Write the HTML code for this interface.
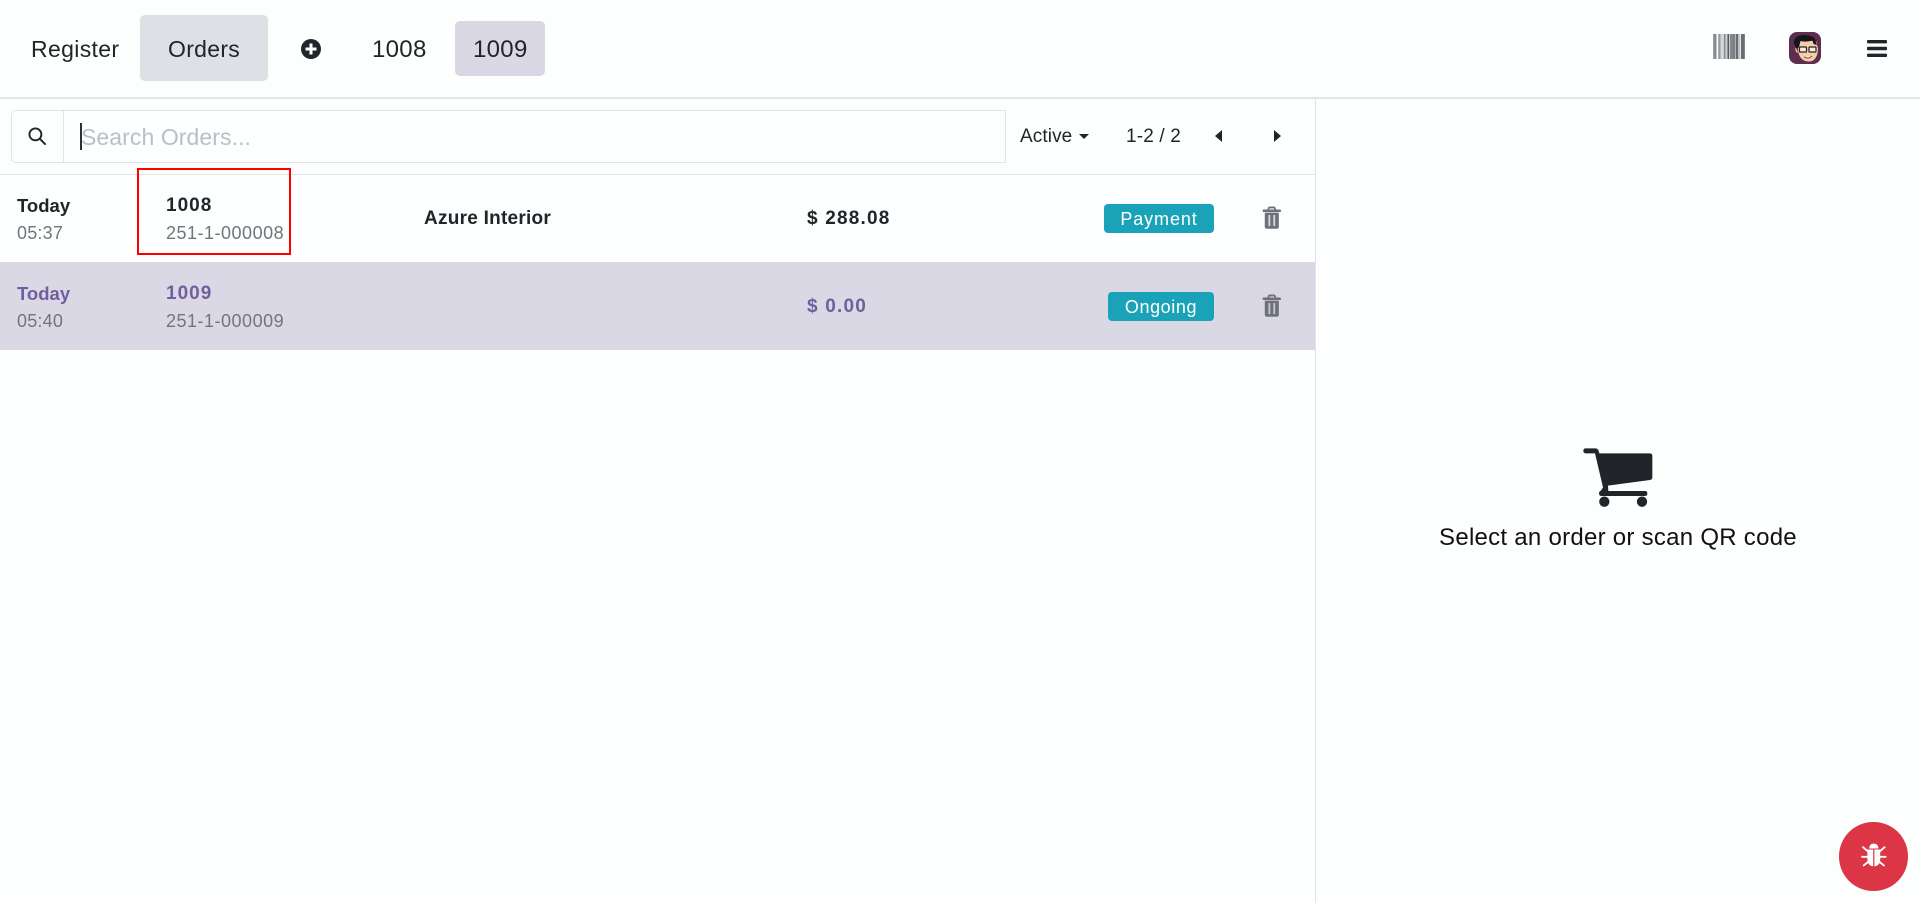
<!DOCTYPE html>
<html lang="en"><head><meta charset="utf-8"><title>Orders</title>
<style>
html,body{margin:0;padding:0}
body{width:1920px;height:903px;overflow:hidden;background:#fdfefe;position:relative;font-family:"Liberation Sans",sans-serif;color:#212529}
.a{position:absolute;white-space:nowrap}
.t{position:absolute;white-space:nowrap;line-height:30px;height:30px}
.b{font-weight:700}
.p{color:#6f5f9f}
.g{color:#72757c}
svg{position:absolute;display:block}
</style></head><body>
<div class="a" style="left:0;top:97px;width:1920px;height:2px;background:#e3e4ea"></div>
<div class="a" style="left:140px;top:15px;width:128px;height:66px;background:#dee0e6;border-radius:5px"></div>
<div class="a" style="left:455px;top:21px;width:90px;height:55px;background:#dbd8e5;border-radius:5px"></div>
<div class="t" style="left:31px;top:34px;font-size:23px;letter-spacing:.35px">Register</div>
<div class="t" style="left:168px;top:34px;font-size:23px;letter-spacing:.3px">Orders</div>
<svg style="left:301px;top:39px" width="20" height="20" viewBox="0 0 20 20"><circle cx="10" cy="10" r="10" fill="#212529"/><path d="M8.500 4.500h3v4h4v3h-4v4h-3v-4h-4v-3h4z" fill="#fff"/></svg>
<div class="t" style="left:372px;top:34.500px;font-size:24px;letter-spacing:.3px">1008</div>
<div class="t" style="left:473px;top:34.500px;font-size:24px;letter-spacing:.3px">1009</div>
<svg style="left:1713px;top:34px" width="32" height="25" viewBox="0 0 95 75"><rect x="0" width="10" height="75" fill="#8a8c91"/><rect x="15" width="7" height="75" fill="#9a9ca1"/><rect x="22" width="10" height="75" fill="#d4d5d8"/><rect x="32" width="5" height="75" fill="#8a8c91"/><rect x="37" width="6" height="75" fill="#d0d1d4"/><rect x="43" width="5" height="75" fill="#55585e"/><rect x="50" width="10" height="75" fill="#85878c"/><rect x="60" width="5" height="75" fill="#66696f"/><rect x="67" width="8" height="75" fill="#696c72"/><rect x="75" width="5" height="75" fill="#b8b9bd"/><rect x="83" width="12" height="75" fill="#696c72"/></svg>
<svg style="left:1789px;top:32px" width="32" height="32" viewBox="0 0 32 32"><rect width="32" height="32" rx="8" fill="#5d2e50"/><path d="M9 14c-.5 9 3 15.500 11 15.500 6 0 9-6 9-13L27 9H11z" fill="#f5cdaa"/><path d="M7 16l-1 0 1 4 2.500 1z" fill="#f0bd98"/><path d="M5 12C4 6 9 3 15 3c7 0 12 2 12 8l1 2-3.500-1-1-4c-4 2-8 2-12 1l-1.500 6L8 17z" fill="#17171a"/><rect x="10.500" y="15" width="7" height="5" rx=".8" fill="#f8ecdf" stroke="#222" stroke-width="1.200"/><rect x="20" y="15" width="7" height="5" rx=".8" fill="#f8ecdf" stroke="#222" stroke-width="1.200"/><path d="M15 25c3 1.500 6 1 8-1" fill="#fff" stroke="#8a4a3a" stroke-width="1"/></svg>
<svg style="left:1867px;top:40px" width="20" height="17" viewBox="0 0 20 17" fill="#212529"><rect width="20" height="3.400" rx="1"/><rect y="6.800" width="20" height="3.400" rx="1"/><rect y="13.600" width="20" height="3.400" rx="1"/></svg>

<div class="a" style="left:11px;top:110px;width:993px;height:51px;border:1px solid #e2e3ea;border-radius:5px 0 0 5px"></div>
<div class="a" style="left:63px;top:110px;width:1px;height:53px;background:#e2e3ea"></div>
<svg style="left:28px;top:127px" width="18" height="18" viewBox="0 0 19 19" fill="none" stroke="#212529" stroke-width="2"><circle cx="7.800" cy="7.800" r="6.300"/><path d="M12.500 12.500l5.500 5.500" stroke-linecap="round"/></svg>
<div class="a" style="left:80px;top:123px;width:1.500px;height:27px;background:#2b2f36"></div>
<div class="t" style="left:81px;top:122px;font-size:23px;color:#bdbdc8;letter-spacing:.08px">Search Orders...</div>
<div class="t" style="left:1020px;top:121.500px;font-size:19px;letter-spacing:.1px">Active</div>
<div class="a" style="left:1079px;top:134px;width:0;height:0;border-left:5.500px solid transparent;border-right:5.500px solid transparent;border-top:5.500px solid #212529"></div>
<div class="t" style="left:1126px;top:121.500px;font-size:19px;letter-spacing:.15px">1-2 / 2</div>
<div class="a" style="left:1215px;top:130px;width:0;height:0;border-top:6px solid transparent;border-bottom:6px solid transparent;border-right:7px solid #212529"></div>
<div class="a" style="left:1274px;top:130px;width:0;height:0;border-top:6px solid transparent;border-bottom:6px solid transparent;border-left:7px solid #212529"></div>

<div class="a" style="left:0;top:174px;width:1315px;height:1px;background:#e3e4ea"></div>
<div class="a" style="left:1315px;top:98px;width:1px;height:805px;background:#e3e4ea"></div>
<div class="a" style="left:0;top:262px;width:1315px;height:88px;background:#dbd8e5"></div>

<div class="t b" style="left:17px;top:190.500px;font-size:18.500px">Today</div>
<div class="t g" style="left:17px;top:218px;font-size:18px;letter-spacing:.2px">05:37</div>
<div class="t b" style="left:166px;top:191px;font-size:19px;letter-spacing:1px">1008</div>
<div class="t g" style="left:166px;top:218px;font-size:18px;letter-spacing:.5px">251-1-000008</div>
<div class="t b" style="left:424px;top:204px;font-size:19px;letter-spacing:.25px">Azure Interior</div>
<div class="t b" style="left:807px;top:204px;font-size:19px;letter-spacing:1.200px">$ 288.08</div>
<div class="a" style="left:1104px;top:204px;width:110px;height:29px;background:#1aa3b8;border-radius:4px"></div>
<div class="t" style="left:1104px;top:204px;width:110px;text-align:center;font-size:18px;color:#fff;letter-spacing:.9px">Payment</div>
<div class="a" style="left:137px;top:168px;width:150px;height:83px;border:2.500px solid #f00"></div>

<div class="t b p" style="left:17px;top:278.500px;font-size:18.500px">Today</div>
<div class="t g" style="left:17px;top:306px;font-size:18px;letter-spacing:.2px">05:40</div>
<div class="t b p" style="left:166px;top:279px;font-size:19px;letter-spacing:1px">1009</div>
<div class="t g" style="left:166px;top:306px;font-size:18px;letter-spacing:.5px">251-1-000009</div>
<div class="t b p" style="left:807px;top:292px;font-size:19px;letter-spacing:1.200px">$ 0.00</div>
<div class="a" style="left:1108px;top:292px;width:106px;height:29px;background:#1aa3b8;border-radius:4px"></div>
<div class="t" style="left:1108px;top:292px;width:106px;text-align:center;font-size:18px;color:#fff;letter-spacing:.6px">Ongoing</div>

<svg style="left:1255px;top:201px" width="33" height="33" viewBox="0 0 108 108"><g fill="#6e7177"><path d="M40 29l3-8q1-3 5-3h14q4 0 5 3l3 8h-6l-2-5H48l-2 5z"/><rect x="25" y="28" width="60" height="8" rx="3"/><path d="M32 38h46v46q0 7-7 7H39q-7 0-7-7z"/></g><rect x="44" y="46" width="6" height="36" fill="#d8d9dc"/><rect x="60" y="46" width="6" height="36" fill="#d8d9dc"/></svg>
<svg style="left:1255px;top:289px" width="33" height="33" viewBox="0 0 108 108"><g fill="#6e7177"><path d="M40 29l3-8q1-3 5-3h14q4 0 5 3l3 8h-6l-2-5H48l-2 5z"/><rect x="25" y="28" width="60" height="8" rx="3"/><path d="M32 38h46v46q0 7-7 7H39q-7 0-7-7z"/></g><rect x="44" y="46" width="6" height="36" fill="#c9c6d2"/><rect x="60" y="46" width="6" height="36" fill="#c9c6d2"/></svg>

<svg style="left:1575px;top:440px" width="90" height="75" viewBox="0 0 270 225" fill="#212529"><path d="M32 25H60Q69 25 71 33L73 40H224Q232 40 232 48V112Q232 119 225 120L99 137L100 153H210Q217 153 217 160Q217 168 210 168H80Q72 168 72 160Q72 154 78 152L84 142L60 40H32Q25 40 25 32Q25 25 32 25Z"/><circle cx="88" cy="185" r="15.500"/><circle cx="201" cy="185" r="15.500"/></svg>
<div class="t" style="left:1315px;top:523px;width:606px;text-align:center;font-size:24px;letter-spacing:.27px;color:#111">Select an order or scan QR code</div>

<div class="a" style="left:1839px;top:822px;width:68.500px;height:68.500px;border-radius:50%;background:#dc3545"></div>
<svg style="left:1856.700px;top:839.700px" width="33" height="33" viewBox="0 0 108 108" fill="#fff"><path d="M40 28q0-16 15-16t15 16z"/><path d="M34 31H53V86Q34 84 34 62zM57 31H76V62Q76 84 57 86z"/><path d="M18 22L36 38M92 22L74 38M14 55H36M96 55H74M20 85L36 72M90 85L74 72" stroke="#fff" stroke-width="6" fill="none"/></svg>
</body></html>
